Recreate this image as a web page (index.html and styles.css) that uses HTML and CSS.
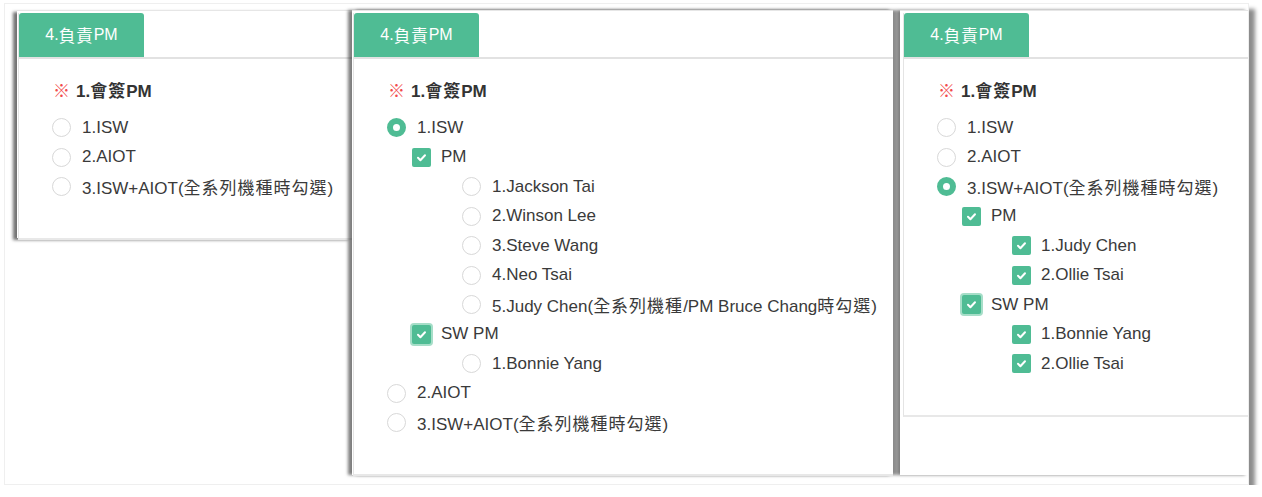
FILE: index.html
```html
<!DOCTYPE html>
<html lang="zh-Hant">
<head>
<meta charset="utf-8">
<title>負責PM</title>
<link rel="stylesheet" href="styles.css">
</head>
<body>
<div class="frame">
  <section class="shot shot-1">
    <div class="card">
      <div class="card-head"><div class="tab">4.<span class="zh">負責</span>PM</div></div>
      <div class="card-body">
        <div class="title"><span class="req">※</span>1.<span class="zh">會簽</span>PM</div>
        <div class="row"><span class="radio"></span><span class="lbl">1.ISW</span></div>
        <div class="row"><span class="radio"></span><span class="lbl">2.AIOT</span></div>
        <div class="row"><span class="radio"></span><span class="lbl">3.ISW+AIOT(<span class="zh">全系列機種時勾選</span>)</span></div>
      </div>
    </div>
  </section>

  <section class="shot shot-2">
    <div class="card">
      <div class="card-head"><div class="tab">4.<span class="zh">負責</span>PM</div></div>
      <div class="card-body">
        <div class="title"><span class="req">※</span>1.<span class="zh">會簽</span>PM</div>
        <div class="row"><span class="radio on"></span><span class="lbl">1.ISW</span></div>
        <div class="row l2"><span class="check"><svg viewBox="0 0 19 19"><polyline points="6,9.8 8.4,12.2 13,7.2"/></svg></span><span class="lbl">PM</span></div>
        <div class="row l3"><span class="radio"></span><span class="lbl">1.Jackson Tai</span></div>
        <div class="row l3"><span class="radio"></span><span class="lbl">2.Winson Lee</span></div>
        <div class="row l3"><span class="radio"></span><span class="lbl">3.Steve Wang</span></div>
        <div class="row l3"><span class="radio"></span><span class="lbl">4.Neo Tsai</span></div>
        <div class="row l3"><span class="radio"></span><span class="lbl">5.Judy Chen(<span class="zh">全系列機種</span>/PM Bruce Chang<span class="zh">時勾選</span>)</span></div>
        <div class="row l2"><span class="check focus"><svg viewBox="0 0 19 19"><polyline points="6,9.8 8.4,12.2 13,7.2"/></svg></span><span class="lbl">SW PM</span></div>
        <div class="row l3"><span class="radio"></span><span class="lbl">1.Bonnie Yang</span></div>
        <div class="row"><span class="radio"></span><span class="lbl">2.AIOT</span></div>
        <div class="row"><span class="radio"></span><span class="lbl">3.ISW+AIOT(<span class="zh">全系列機種時勾選</span>)</span></div>
      </div>
    </div>
  </section>

  <section class="shot shot-3">
    <div class="card">
      <div class="card-head"><div class="tab">4.<span class="zh">負責</span>PM</div></div>
      <div class="card-body">
        <div class="title"><span class="req">※</span>1.<span class="zh">會簽</span>PM</div>
        <div class="row"><span class="radio"></span><span class="lbl">1.ISW</span></div>
        <div class="row"><span class="radio"></span><span class="lbl">2.AIOT</span></div>
        <div class="row"><span class="radio on"></span><span class="lbl">3.ISW+AIOT(<span class="zh">全系列機種時勾選</span>)</span></div>
        <div class="row l2"><span class="check"><svg viewBox="0 0 19 19"><polyline points="6,9.8 8.4,12.2 13,7.2"/></svg></span><span class="lbl">PM</span></div>
        <div class="row l3"><span class="check"><svg viewBox="0 0 19 19"><polyline points="6,9.8 8.4,12.2 13,7.2"/></svg></span><span class="lbl">1.Judy Chen</span></div>
        <div class="row l3"><span class="check"><svg viewBox="0 0 19 19"><polyline points="6,9.8 8.4,12.2 13,7.2"/></svg></span><span class="lbl">2.Ollie Tsai</span></div>
        <div class="row l2"><span class="check focus"><svg viewBox="0 0 19 19"><polyline points="6,9.8 8.4,12.2 13,7.2"/></svg></span><span class="lbl">SW PM</span></div>
        <div class="row l3"><span class="check"><svg viewBox="0 0 19 19"><polyline points="6,9.8 8.4,12.2 13,7.2"/></svg></span><span class="lbl">1.Bonnie Yang</span></div>
        <div class="row l3"><span class="check"><svg viewBox="0 0 19 19"><polyline points="6,9.8 8.4,12.2 13,7.2"/></svg></span><span class="lbl">2.Ollie Tsai</span></div>
      </div>
    </div>
  </section>
</div>
</body>
</html>
```

FILE: styles.css
```css
* { box-sizing: border-box; }

html, body {
  margin: 0;
  background: #fff;
}

body {
  font-family: "Liberation Sans", Arial, "Noto Sans CJK TC", sans-serif;
  color: #3a3a3a;
}

.frame {
  margin: 3px 0 0 4px;
  width: 1245px;
  height: 482px;
  background: #fff;
  border: 1px solid #efefef;
  box-shadow: 6px 6px 4px rgba(0, 0, 0, 0.45);
  display: flex;
  align-items: flex-start;
  padding: 6px 0 0 12px;
}

.shot {
  flex: none;
  background: #fff;
  border-top: 1px solid #e6e6e6;
  padding: 2px 0 0 1px;
}

.shot-1 {
  width: 335px;
  height: 228px;
  box-shadow: -4px 2px 3px rgba(0, 0, 0, 0.55);
}

.shot-2 {
  width: 541px;
  height: 465px;
  box-shadow: -4px 0 3px rgba(0, 0, 0, 0.5), 4px 0 3px rgba(0, 0, 0, 0.45);
}

.shot-3 {
  width: 348px;
  height: 465px;
  margin-left: 7px;
  padding-left: 3px;
  box-shadow: -3px 0 3px rgba(0, 0, 0, 0.5);
}

.card {
  border-left: 1px solid #e4e4e4;
  border-bottom: 2px solid #e8e8e8;
}

.card-head {
  height: 46px;
  border-bottom: 2px solid #e2e2e2;
}

.tab {
  width: 125px;
  height: 44px;
  background: #4fbc94;
  border-radius: 3px 3px 0 0;
  color: #fff;
  font-size: 16px;
  display: flex;
  align-items: center;
  justify-content: center;
}

.tab .zh {
  font-size: 16.5px;
  letter-spacing: 1px;
}

.card-body {
  padding: 20px 0 36px 33px;
}

.title {
  font-weight: bold;
  font-size: 17px;
  line-height: 22px;
  color: #333;
  margin-bottom: 10px;
  padding-left: 1px;
}

.req {
  color: #f24b4b;
  font-family: "Noto Sans CJK TC", sans-serif;
  font-weight: normal;
  margin-right: 6px;
}

.zh {
  font-family: "Noto Sans CJK TC", sans-serif;
  font-size: 17px;
  letter-spacing: 1px;
}

.row {
  display: flex;
  align-items: center;
  height: 29.5px;
  font-size: 17px;
}

.l2 { padding-left: 25px; }
.l3 { padding-left: 75px; }

.radio {
  flex: none;
  width: 19px;
  height: 19px;
  border: 1.5px solid #d8d8d8;
  border-radius: 50%;
  background: #fff;
  margin-right: 11px;
}

.radio.on {
  border: 6px solid #4fbc94;
}

.check {
  flex: none;
  width: 19px;
  height: 19px;
  border-radius: 2px;
  background: #4fbc94;
  margin-right: 10px;
  display: flex;
}

.check svg {
  width: 19px;
  height: 19px;
}

.check polyline {
  fill: none;
  stroke: #fff;
  stroke-width: 2;
  stroke-linecap: round;
  stroke-linejoin: round;
}

.check.focus {
  box-shadow: 0 0 0 2px #a6dec8;
}

.lbl {
  white-space: nowrap;
}
```
